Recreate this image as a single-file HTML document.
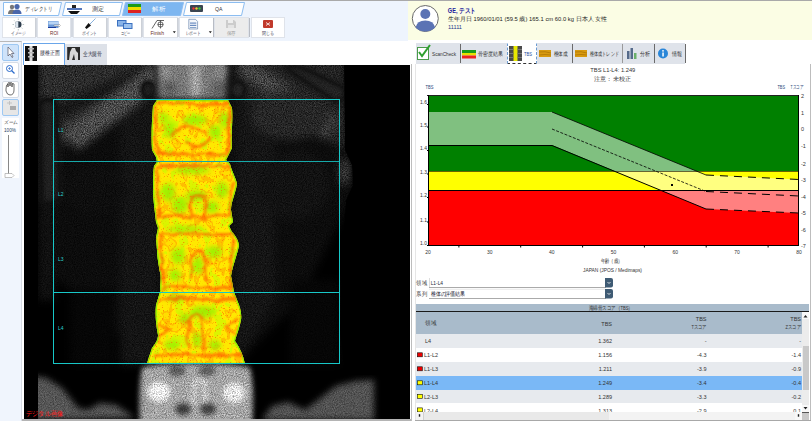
<!DOCTYPE html>
<html><head><meta charset="utf-8">
<style>
*{box-sizing:border-box;margin:0;padding:0}
html,body{width:812px;height:421px;overflow:hidden;background:#fff;font-family:"Liberation Sans",sans-serif;font-size:7px;color:#222}
.a{position:absolute}
#topline{left:0;top:0;width:812px;height:1px;background:#a9a9a9}
#lefttop{left:0;top:1px;width:408px;height:40px;background:#eef4fd}
#hdr{left:408px;top:1px;width:404px;height:39px;background:#fbfde4}
#hdr2{left:408px;top:40px;width:404px;height:3px;background:#fff}
.tab{top:2px;height:14px;width:58px}
.tb{top:18px;height:20px;width:33px;background:#fff;border:1px solid #d8dde5}
#toolcol{left:0;top:41px;width:22px;height:380px;background:#f0f5fd;border-top:1px solid #b8b8b8;border-right:1px solid #d6dbe3}
.tool{left:2px;width:17px;height:17px;background:#fff;border:1px solid #d5dce6;border-radius:2px}
#img{left:24px;top:65px;width:386px;height:354px;background:#000;overflow:hidden}
#botbar{left:22px;top:419px;width:390px;height:2px;background:#b4b4b4}
#vline{left:411px;top:64px;width:1px;height:357px;background:#bdbdbd}
#rtabs{left:416px;top:43px;width:269px;height:21px;background:#dfe3ea}
.sep{top:44px;width:1px;height:19px;background:#6a6a6a}
#rpanel{left:415px;top:64px;width:396px;height:357px;border-left:1px solid #e6e6e6;border-right:1px solid #bdbdbd}
</style></head><body>
<div class="a" id="topline"></div>
<div class="a" id="lefttop"></div>
<div class="a" id="hdr"></div>
<div class="a" id="toolcol"></div>

<!-- left main tabs -->
<svg class="a" style="left:0;top:0" width="408" height="41" viewBox="0 0 408 41">
 <g stroke="#8cbdf0" stroke-width="1">
  <path d="M3.5,2.5 L61.5,2.5 L58.5,15.5 L3.5,15.5 Z" fill="#fff"/>
  <path d="M65.5,2.5 L122.5,2.5 L119.5,15.5 L62.5,15.5 Z" fill="#fff"/>
  <path d="M125.5,2.5 L183.5,2.5 L180.5,15.5 L122.5,15.5 Z" fill="#7db6f0"/>
  <path d="M186.5,2.5 L244.5,2.5 L241.5,15.5 L183.5,15.5 Z" fill="#fff"/>
 </g>
 <!-- person icon -->
 <circle cx="12" cy="7" r="2.2" fill="#777"/><path d="M8,14 Q8,9.5 12,9.5 Q14,9.5 15,11 L15,14 Z" fill="#777"/>
 <circle cx="17" cy="6.5" r="2.6" fill="#4a67ab"/><path d="M12.5,14 Q12.5,9.5 17,9.5 Q21.5,9.5 21.5,14 Z" fill="#4a67ab"/>
 <!-- scanner icon -->
 <rect x="72" y="5" width="4" height="3" fill="#222"/><rect x="67" y="8" width="15" height="2" fill="#5577bb"/><path d="M68,11 L80,11 L77,14 L71,14 Z" fill="#111"/>
 <!-- analysis icon -->
 <rect x="128" y="4" width="13" height="3" fill="#1a9a1a"/><rect x="128" y="7" width="13" height="3" fill="#eedd00"/><rect x="128" y="10" width="13" height="3" fill="#dd2222"/>
 <!-- QA icon -->
 <rect x="190" y="5" width="13" height="7" rx="1" fill="#3a4552"/><circle cx="193.5" cy="8.5" r="1.2" fill="#e33"/><circle cx="196.5" cy="8.5" r="1.2" fill="#ec3"/><circle cx="199.5" cy="8.5" r="1.2" fill="#3c3"/>
 <g font-family="Liberation Sans" font-size="6" fill="#333">
  <text x="25" y="11" textLength="27.5" lengthAdjust="spacingAndGlyphs">ディレクトリ</text><text x="92" y="11" textLength="12" lengthAdjust="spacingAndGlyphs">測定</text><text x="152" y="11" fill="#fff" textLength="13" lengthAdjust="spacingAndGlyphs">解析</text><text x="215" y="11" textLength="7.5" lengthAdjust="spacingAndGlyphs">QA</text>
 </g>
 <!-- toolbar buttons -->
 <g fill="#fff" stroke="#dfe3ea">
  <rect x="2.5" y="17.5" width="33" height="20"/>
  <rect x="37.5" y="17.5" width="33" height="20"/>
  <rect x="73.5" y="17.5" width="33" height="20"/>
  <rect x="108.5" y="17.5" width="33" height="20"/>
  <rect x="143.5" y="17.5" width="34" height="20"/>
  <rect x="179.5" y="17.5" width="34" height="20"/>
  <rect x="214.5" y="17.5" width="34" height="20" fill="#ececec"/>
  <rect x="251.5" y="17.5" width="33" height="20"/>
 </g>
 <g stroke="#b8bcc4" stroke-width="1">
  <line x1="36" y1="18" x2="36" y2="37"/><line x1="72" y1="18" x2="72" y2="37"/><line x1="107" y1="18" x2="107" y2="37"/><line x1="142" y1="18" x2="142" y2="37"/><line x1="178" y1="18" x2="178" y2="37"/><line x1="213.5" y1="18" x2="213.5" y2="37"/><line x1="249.5" y1="18" x2="249.5" y2="37"/>
 </g>
 <!-- icons -->
 <g stroke="#9aa" stroke-width="0.7"><line x1="18.3" y1="18.5" x2="18.3" y2="20"/><line x1="18.3" y1="29" x2="18.3" y2="30.5"/><line x1="12.5" y1="24.5" x2="14" y2="24.5"/><line x1="22.6" y1="24.5" x2="24.1" y2="24.5"/><line x1="14.2" y1="20.4" x2="15.2" y2="21.4"/><line x1="21.4" y1="27.6" x2="22.4" y2="28.6"/><line x1="14.2" y1="28.6" x2="15.2" y2="27.6"/><line x1="21.4" y1="21.4" x2="22.4" y2="20.4"/></g>
 <circle cx="18.3" cy="24.5" r="3.2" fill="#2a3a4a"/><path d="M18.3,21.3 A3.2,3.2 0 0 0 18.3,27.7 Z" fill="#dde6ee"/>
 <rect x="48" y="21" width="10.5" height="7" fill="#6d9ad8"/><rect x="48.5" y="21.5" width="9.5" height="3" fill="#b8d4f4"/><rect x="48" y="27" width="8" height="1" fill="#1a3a9a"/><path d="M54,25 L59,25 L59,24 L60.5,25.5 L59,27 L59,26 L54,26 Z" fill="#fff" stroke="#777" stroke-width="0.4"/>
 <line x1="90" y1="24" x2="95.5" y2="18.5" stroke="#7aa8d8" stroke-width="0.9"/><path d="M85,27.5 L88.5,23 L91,25.5 L86.5,29 Z" fill="#111"/>
 <rect x="117.5" y="20.5" width="8.5" height="5.5" fill="#8ab4e8" stroke="#3a70c0" stroke-width="1"/><rect x="123.5" y="23.5" width="8.5" height="5" fill="#9cc2ee" stroke="#3a70c0" stroke-width="1"/>
 <path d="M152,28.5 L157,20.5 L164,20.5" stroke="#222" stroke-width="0.7" fill="none"/><circle cx="160.5" cy="24.5" r="2.6" fill="#fff" stroke="#222" stroke-width="0.7"/><path d="M160.5,20.5 L160.5,28.5 M157.8,24.5 L163.2,24.5" stroke="#222" stroke-width="0.6"/>
 <path d="M172.8,31.3 L175.8,31.3 L174.3,33.3 Z" fill="#222"/>
 <path d="M188.8,19.3 L195.5,19.3 L197.6,21.5 L197.6,29 L188.8,29 Z" fill="#f4f7fb" stroke="#6a88b0" stroke-width="0.7"/><rect x="190" y="22.5" width="6.3" height="1.2" fill="#6a8cc0"/><rect x="190" y="24.8" width="6.3" height="1.2" fill="#6a8cc0"/><rect x="190" y="27" width="6.3" height="1" fill="#8aa6cc"/>
 <path d="M208.8,31.3 L211.8,31.3 L210.3,33.3 Z" fill="#222"/>
 <path d="M226,20 L234,20 L236,22 L236,28 L226,28 Z" fill="#ccc"/><rect x="228" y="20" width="5" height="3" fill="#eee"/><rect x="228" y="25" width="6" height="3" fill="#e4e4e4"/>
 <rect x="263" y="20" width="10" height="8" rx="1" fill="#c0392b"/><path d="M266,22.5 L270,25.5 M270,22.5 L266,25.5" stroke="#fff" stroke-width="0.8"/>
 <g font-family="Liberation Sans" font-size="5" fill="#445" text-anchor="middle">
  <text x="18.3" y="35" textLength="15" lengthAdjust="spacingAndGlyphs">イメージ</text><text x="54.2" y="35" textLength="8.3" lengthAdjust="spacingAndGlyphs" fill="#6a2a2a">ROI</text><text x="89.5" y="35" textLength="15" lengthAdjust="spacingAndGlyphs">ポイント</text><text x="125.3" y="35" textLength="9.4" lengthAdjust="spacingAndGlyphs">コピー</text><text x="157.2" y="35.3" textLength="13.6" lengthAdjust="spacingAndGlyphs" fill="#6a2a2a">Finish</text><text x="193" y="35" textLength="15" lengthAdjust="spacingAndGlyphs">レポート</text><text x="231" y="35" fill="#999" textLength="9" lengthAdjust="spacingAndGlyphs">保存</text><text x="268" y="35" textLength="12" lengthAdjust="spacingAndGlyphs">閉じる</text>
 </g>
</svg>
<!-- tool column buttons -->
<div class="a tool" style="top:44px;background:#cfe3fa;border-color:#9ec8f2"></div>
<div class="a tool" style="top:62px"></div>
<div class="a tool" style="top:81px"></div>
<div class="a tool" style="top:99px;background:#e6e6e6;border-color:#9ec8f2"></div>
<div class="a" style="left:2px;top:118px;width:17px;height:60px;background:#fff"></div>
<svg class="a" style="left:0;top:41px" width="22" height="150" viewBox="0 41 22 150">
 <path d="M8,47 L8,56 L10,54 L12,57.5 L13,57 L11.5,53.5 L14,53.5 Z" fill="#fff" stroke="#556" stroke-width="0.7"/>
 <circle cx="9.5" cy="68.5" r="3" fill="none" stroke="#2a6acb" stroke-width="1"/><line x1="11.5" y1="70.5" x2="14.5" y2="73.5" stroke="#2a6acb" stroke-width="1.2"/><path d="M8,68.5 L11,68.5 M9.5,67 L9.5,70" stroke="#2a6acb" stroke-width="0.6"/>
 <path d="M6,89 Q6,84 8,84 L8,87 L8,83 Q9,82 10,83 L10,86 L10,83 Q11,82 12,83 L12,87 L12,84 Q13,83 14,84 L14,90 Q14,95 10,95 Q7,95 6,91 Z" fill="#fff" stroke="#333" stroke-width="0.7"/>
 <path d="M7,103 L12,103 M9.5,101 L9.5,105" stroke="#bbb" stroke-width="0.8"/><rect x="10" y="106" width="6" height="4" fill="#aaa"/>
 <g font-family="Liberation Sans" font-size="5" fill="#333"><text x="4" y="124" textLength="14" lengthAdjust="spacingAndGlyphs">ズーム</text><text x="4" y="131.5" fill="#246" textLength="12" lengthAdjust="spacingAndGlyphs">100%</text></g>
 <line x1="8.5" y1="135" x2="8.5" y2="176" stroke="#888" stroke-width="1"/>
 <path d="M5,173.5 L12,173.5 L14,175.5 L12,177.5 L5,177.5 Z" fill="#fff" stroke="#999" stroke-width="0.6"/>
</svg>
<!-- image view tabs -->
<div class="a" style="left:22px;top:42px;width:388px;height:23px;background:#fff"></div>
<div class="a" style="left:23px;top:43px;width:42px;height:22px;background:#fff;border:1px solid #6aa6ea;border-bottom:none"></div>
<div class="a" style="left:65px;top:43.5px;width:42px;height:21.5px;background:#dde1e8"></div>
<svg class="a" style="left:22px;top:42px" width="100" height="23" viewBox="22 42 100 23">
 <rect x="25" y="46" width="12" height="15" fill="#111"/><rect x="29.5" y="46" width="3" height="15" fill="#ddd"/><rect x="28" y="48" width="6" height="1.5" fill="#bbb"/><rect x="28" y="52" width="6" height="1.5" fill="#bbb"/><rect x="28" y="56" width="6" height="1.5" fill="#bbb"/>
 <rect x="67.2" y="47" width="12.8" height="13" fill="#2a2a2a"/><path d="M69,60 L70,52 L72,48 L75,48 L76,51 L78,53 L78,60 L75,60 L74,54 L72,60 Z" fill="#d8d8d8"/>
 <g font-family="Liberation Sans" font-size="5.5" fill="#334"><text x="40" y="54.5" textLength="19.7" lengthAdjust="spacingAndGlyphs">腰椎正面</text><text x="82.8" y="55.8" textLength="19" lengthAdjust="spacingAndGlyphs">全大腿骨</text></g>
</svg>
<div class="a" id="img"></div>
<svg class="a" style="left:24px;top:65px" width="386" height="354" viewBox="24 65 386 354">
<defs>
<filter id="tissue" filterUnits="userSpaceOnUse" x="24" y="65" width="386" height="354" color-interpolation-filters="sRGB">
 <feGaussianBlur in="SourceGraphic" stdDeviation="4" result="b"/>
 <feTurbulence type="fractalNoise" baseFrequency="0.9" numOctaves="2" seed="4" result="n0"/>
 <feGaussianBlur in="n0" stdDeviation="0.4" result="n"/>
 <feColorMatrix in="n" type="matrix" values="1.1 0 0 0 -0.05  1.1 0 0 0 -0.05  1.1 0 0 0 -0.05  0 0 0 0 1" result="ng"/>
 <feComposite in="b" in2="ng" operator="arithmetic" k1="2.0" k2="0" k3="0" k4="0"/>
</filter>
<filter id="bone" filterUnits="userSpaceOnUse" x="24" y="65" width="386" height="354" color-interpolation-filters="sRGB">
 <feGaussianBlur in="SourceGraphic" stdDeviation="3" result="b"/>
 <feTurbulence type="fractalNoise" baseFrequency="0.9" numOctaves="2" seed="9" result="n0"/>
 <feGaussianBlur in="n0" stdDeviation="0.4" result="n"/>
 <feColorMatrix in="n" type="matrix" values="0.5 0 0 0 0.25  0.5 0 0 0 0.25  0.5 0 0 0 0.25  0 0 0 0 1" result="ng"/>
 <feComposite in="b" in2="ng" operator="arithmetic" k1="2.0" k2="0" k3="0" k4="0"/>
</filter>
<filter id="sacf" filterUnits="userSpaceOnUse" x="24" y="65" width="386" height="354" color-interpolation-filters="sRGB">
 <feGaussianBlur in="SourceGraphic" stdDeviation="2.5" result="b"/>
 <feTurbulence type="fractalNoise" baseFrequency="0.9" numOctaves="2" seed="9" result="n0"/>
 <feGaussianBlur in="n0" stdDeviation="0.4" result="n"/>
 <feColorMatrix in="n" type="matrix" values="0.5 0 0 0 0.25  0.5 0 0 0 0.25  0.5 0 0 0 0.25  0 0 0 0 1" result="ng"/>
 <feComposite in="b" in2="ng" operator="arithmetic" k1="2.0" k2="0" k3="0" k4="0"/>
</filter>
<filter id="gb1" filterUnits="userSpaceOnUse" x="24" y="65" width="386" height="354"><feGaussianBlur stdDeviation="0.7"/></filter>
<filter id="gb2" filterUnits="userSpaceOnUse" x="24" y="65" width="386" height="354"><feGaussianBlur stdDeviation="2.5"/></filter>
<filter id="wavy" filterUnits="userSpaceOnUse" x="130" y="90" width="130" height="285">
 <feTurbulence type="fractalNoise" baseFrequency="0.09" numOctaves="2" seed="5" result="t"/>
 <feDisplacementMap in="SourceGraphic" in2="t" scale="7" xChannelSelector="R" yChannelSelector="G" result="d"/>
 <feGaussianBlur in="d" stdDeviation="1.1"/>
</filter>
<filter id="rdots" filterUnits="userSpaceOnUse" x="140" y="95" width="115" height="275" color-interpolation-filters="sRGB">
 <feTurbulence type="fractalNoise" baseFrequency="0.85" numOctaves="1" seed="11" result="t"/>
 <feColorMatrix in="t" type="matrix" values="0 0 0 0 1  0 0 0 0 0.4  0 0 0 0 0  0 0 0 10 -6.3"/>
</filter>
<filter id="spinecol" filterUnits="userSpaceOnUse" x="140" y="95" width="115" height="275" color-interpolation-filters="sRGB">
 <feTurbulence type="fractalNoise" baseFrequency="0.08 0.06" numOctaves="3" seed="21" result="t"/>
 <feColorMatrix in="t" type="matrix" values="1 0 0 0 0  1 0 0 0 0  1 0 0 0 0  0 0 0 0 1" result="g"/>
 <feComponentTransfer in="g">
  <feFuncR type="table" tableValues="0.75 0.75 0.75 0.75 0.75 0.75 0.75 0.75 0.75 0.75 0.75 0.75 1.00 1.00 1.00 1.00 1.00 1.00 1.00 1.00 1.00 1.00 1.00 1.00 1.00 1.00 1.00 1.00 1.00 1.00 1.00 1.00"/>
  <feFuncG type="table" tableValues="1.00 1.00 1.00 1.00 1.00 1.00 1.00 1.00 1.00 1.00 1.00 1.00 0.92 0.92 0.92 0.92 0.92 0.92 0.62 0.62 0.62 0.85 0.85 0.85 0.85 0.85 0.85 0.85 0.85 0.85 0.85 0.85"/>
  <feFuncB type="table" tableValues="0.00 0.00 0.00 0.00 0.00 0.00 0.00 0.00 0.00 0.00 0.00 0.00 0.00 0.00 0.00 0.00 0.00 0.00 0.00 0.00 0.00 0.00 0.00 0.00 0.00 0.00 0.00 0.00 0.00 0.00 0.00 0.00"/>
 </feComponentTransfer>
</filter>
<clipPath id="spclip"><path d="M157,100 C175,99 210,101 228,100 L232,108 C233,120 231,135 232,148 L228,156 L226,160 L230,164 C232,172 236,178 237,184 C235,195 231,202 231,210 L233,222 L229,226 L232,232 C236,236 239,242 239,246 C236,258 232,268 231,276 L234,292 L237,300 C240,306 242,314 241,320 C239,330 236,336 235,341 C240,348 243,355 245,364 L147,364 C149,356 151,352 152,348 C157,342 158,338 158,335 C156,325 155,315 156,305 L160,292 C160,285 161,280 160.5,275 C158,262 157,255 157,250 L156,238 L158,228 L156,222 C155,212 153,200 153,190 C153,180 153,172 154,166 L157,162 L156,157 L152,150 C151,135 152,120 153,106 Z"/></clipPath>
</defs>
<rect x="24" y="65" width="386" height="354" fill="#000"/>
<g filter="url(#tissue)">
 <rect x="0" y="40" width="500" height="400" fill="#000"/>
 <path d="M38,40 L345,40 L348,120 L352,200 L330,240 L300,300 L240,360 L150,360 L80,300 L38,260 Z" fill="#0c0c0c"/>
 <path d="M38,40 L160,40 L150,90 L80,140 L38,150 Z" fill="#2c2c2c"/>
 <path d="M40,112 L150,62 L156,74 L46,126 Z" fill="#161616"/>
 <path d="M236,40 L345,40 L348,150 L300,130 L236,95 Z" fill="#242424"/>
 <path d="M38,100 L58,100 L60,200 L38,200 Z" fill="#202020"/>
 <path d="M38,200 L55,200 L55,300 L38,300 Z" fill="#101010"/>
 <path d="M120,100 L158,100 L158,365 L120,365 Z" fill="#141414"/>
 <path d="M236,100 L275,100 L275,300 L236,365 Z" fill="#151515"/>
 <ellipse cx="295" cy="185" rx="35" ry="35" fill="#121212"/>
 <ellipse cx="95" cy="190" rx="30" ry="25" fill="#0e0e0e"/>
 <ellipse cx="345" cy="172" rx="6" ry="14" fill="#3a3a3a"/>
 <path d="M70,290 L115,290 L115,365 L70,365 Z" fill="#060606"/>
 <path d="M290,280 L340,280 L340,365 L290,365 Z" fill="#060606"/>
 <path d="M152,64 L162,86 L78,150 L62,132 Z" fill="#4a4a4a"/>
 <path d="M236,70 L248,60 L338,118 L326,138 Z" fill="#444"/>
 <ellipse cx="290" cy="115" rx="40" ry="25" fill="#262626"/>
</g>
<g filter="url(#bone)">
 <!-- ribs -->
 
 
 
 <path d="M270,58 L286,60 L348,90 L340,104 Z" fill="#262626" filter="url(#gb2)"/>
 <path d="M40,100 L56,100 L60,200 L42,205 Z" fill="#202020"/>
 <!-- T12 -->
 <path d="M156,60 L228,60 C227,75 226,90 226,99 L158,99 C158,90 157,75 156,60 Z" fill="#787878"/>
 <path d="M190,66 L201,66 L200,98 L191,98 Z" fill="#a8a8a8"/>
 <ellipse cx="170" cy="88" rx="7" ry="7" fill="#5a5a5a"/>
 <ellipse cx="218" cy="88" rx="6" ry="7" fill="#5a5a5a"/>
 <ellipse cx="165" cy="72" rx="8" ry="6" fill="#8c8c8c"/>
 <ellipse cx="222" cy="72" rx="6" ry="6" fill="#888"/>
 <ellipse cx="148" cy="90" rx="6" ry="9" fill="#222"/>
 <ellipse cx="238" cy="90" rx="7" ry="9" fill="#262626"/>
 <!-- iliac -->
 <path d="M20,380 L30,376 L46,378 L62,388 L78,408 L88,410 L100,403 L116,405 L135,418 L20,420 Z" fill="#555"/>
 <path d="M262,420 L272,406 L288,402 L305,410 L318,400 L336,386 L356,381 L374,380 L374,420 Z" fill="#525252"/>
</g>
<g filter="url(#sacf)">
 <!-- sacrum -->
 <path d="M142,368 C150,362 240,362 250,368 C254,385 253,405 252,425 L140,425 C139,405 139,385 142,368 Z" fill="#a4a4a4"/>
 <ellipse cx="177" cy="371" rx="9" ry="5" fill="#555"/>
 <ellipse cx="207" cy="371" rx="9" ry="5" fill="#5a5a5a"/>
 <ellipse cx="159" cy="392" rx="11" ry="10" fill="#f0f0f0"/>
 <ellipse cx="234" cy="393" rx="11" ry="10" fill="#e8e8e8"/>
 <path d="M194,404 L194,385 C194,378 205,378 205,385 L205,404" fill="none" stroke="#e0e0e0" stroke-width="3"/>
 <ellipse cx="183" cy="409" rx="8" ry="6" fill="#3a3a3a"/>
 <ellipse cx="208" cy="409" rx="8" ry="6" fill="#3e3e3e"/>
 <ellipse cx="145" cy="405" rx="5" ry="10" fill="#9a9a9a"/>
</g>
<rect x="24" y="65" width="14" height="354" fill="#000"/>
<path d="M344,60 L345,150 L352,165 L353,185 L346,200 L342,260 L340,330 L345,375 L420,375 L420,60 Z" fill="#000" filter="url(#gb1)"/>
<g clip-path="url(#spclip)">
 <rect x="140" y="95" width="115" height="275" fill="#ffe600"/>
 <rect x="140" y="95" width="115" height="275" filter="url(#spinecol)" opacity="0.55"/>
 <g filter="url(#gb2)" fill="#9af000" opacity="0.9">
  <ellipse cx="195" cy="120" rx="12" ry="5"/>
  <ellipse cx="170" cy="130" rx="6" ry="8"/>
  <ellipse cx="215" cy="132" rx="6" ry="7"/>
  <ellipse cx="192" cy="170" rx="18" ry="4"/>
  <ellipse cx="168" cy="192" rx="7" ry="9"/>
  <ellipse cx="196" cy="196" rx="10" ry="6"/>
  <ellipse cx="222" cy="190" rx="6" ry="8"/>
  <ellipse cx="185" cy="229" rx="20" ry="3"/>
  <ellipse cx="178" cy="256" rx="7" ry="8"/>
  <ellipse cx="214" cy="252" rx="8" ry="6"/>
  <ellipse cx="203" cy="312" rx="13" ry="6"/>
  <ellipse cx="172" cy="345" rx="8" ry="5"/>
  <ellipse cx="175" cy="298" rx="8" ry="3"/>
  <ellipse cx="215" cy="345" rx="6" ry="5"/>
  <ellipse cx="197" cy="340" rx="4" ry="8"/>
  <ellipse cx="180" cy="205" rx="8" ry="8"/>
  <ellipse cx="212" cy="207" rx="7" ry="6"/>
  <ellipse cx="198" cy="265" rx="5" ry="9"/>
  <ellipse cx="175" cy="275" rx="6" ry="6"/>
  <ellipse cx="185" cy="318" rx="6" ry="5"/>
  <ellipse cx="225" cy="120" rx="5" ry="8"/>
  <ellipse cx="163" cy="118" rx="4" ry="6"/>
 </g>
 <g fill="none" stroke="#86f000" stroke-width="2.5" opacity="0.9" filter="url(#gb1)"><path d="M157,100 C175,99 210,101 228,100 L232,108 C233,120 231,135 232,148 L228,156 L226,160 L230,164 C232,172 236,178 237,184 C235,195 231,202 231,210 L233,222 L229,226 L232,232 C236,236 239,242 239,246 C236,258 232,268 231,276 L234,292 L237,300 C240,306 242,314 241,320 C239,330 236,336 235,341 C240,348 243,355 245,364 L147,364 C149,356 151,352 152,348 C157,342 158,338 158,335 C156,325 155,315 156,305 L160,292 C160,285 161,280 160.5,275 C158,262 157,255 157,250 L156,238 L158,228 L156,222 C155,212 153,200 153,190 C153,180 153,172 154,166 L157,162 L156,157 L152,150 C151,135 152,120 153,106 Z"/></g>
 <g filter="url(#wavy)">
 <g fill="none" stroke="#ff5a00" stroke-width="2.8" opacity="0.7" stroke-linecap="round">
  <path d="M158,104 C175,102 210,104 228,104"/>
  <path d="M156,108 C155,125 155,140 157,152 M230,108 C229,125 230,140 228,152"/>
  <path d="M157,153 C175,156 210,152 227,155"/>
  <path d="M158,167 C175,164 210,167 231,166"/>
  <path d="M158,170 C157,185 157,200 160,214 M233,183 C230,195 229,205 230,214"/>
  <path d="M159,217 C180,213 205,219 229,215"/>
  <path d="M191,219 L191,203 C191,193 206,193 206,203 L206,219"/>
  <path d="M172,135 C178,126 196,124 205,132 M188,142 C194,150 206,146 210,138"/>
  <path d="M160,235 C180,232 210,236 234,234"/>
  <path d="M160,238 C161,255 163,270 164,286 M234,240 C231,255 229,270 231,286"/>
  <path d="M162,288 C180,284 210,290 232,287"/>
  <path d="M192,279 L192,260 C192,249 205,249 205,260 L205,279"/>
  <path d="M160,300 C180,296 210,302 236,299"/>
  <path d="M159,325 L168,330 L160,336 M236,320 L227,327 L236,334"/>
  <path d="M155,356 C180,352 210,358 242,354"/>
  <path d="M188,348 L188,325 C188,312 203,312 203,325 L203,348"/>
 </g>
 </g>
 <rect x="140" y="95" width="115" height="275" filter="url(#rdots)" opacity="0.65"/>
</g>
<!-- ROI -->
<g fill="none" shape-rendering="crispEdges">
 <rect x="53.5" y="99.5" width="286" height="264" stroke="#17c7c7"/>
 <line x1="54" y1="161.5" x2="339" y2="161.5" stroke="#16a9a9"/>
 <line x1="54" y1="292.5" x2="339" y2="292.5" stroke="#18c8c8"/>
</g>
<g font-family="Liberation Sans" font-size="5" fill="#2ad0d0">
 <text x="58" y="132">L1</text><text x="58" y="196">L2</text><text x="58" y="261">L3</text><text x="58" y="330">L4</text>
</g>
<text x="26" y="415.5" font-family="Liberation Sans" font-size="6.5" fill="#ff1a1a" textLength="37" lengthAdjust="spacingAndGlyphs">デジタル画像</text>
</svg>

<div class="a" id="botbar"></div>
<div class="a" id="vline"></div>
<div class="a" id="rpanel"></div>
<div class="a" id="rtabs"></div>

<!-- patient header -->
<svg class="a" style="left:408px;top:1px" width="404" height="39" viewBox="408 1 404 39">
 <circle cx="425.3" cy="18.5" r="13" fill="#fff" stroke="#6a6a6a" stroke-width="1"/>
 <circle cx="425.3" cy="14" r="5" fill="#5b73b4"/>
 <path d="M415.5,27.5 Q417,20.5 425.3,20.5 Q433.5,20.5 435.2,27.5 Q431,31.5 425.3,31.5 Q419.5,31.5 415.5,27.5 Z" fill="#5b73b4"/>
 <text x="447.8" y="12.8" font-family="Liberation Sans" font-size="7" font-weight="bold" fill="#1c1c9c" textLength="28" lengthAdjust="spacingAndGlyphs">GE, テスト</text>
 <text x="447.8" y="20.8" font-family="Liberation Sans" font-size="5.8" fill="#222" textLength="159.6" lengthAdjust="spacing">生年月日 1960/01/01  (59.5 歳)   165.1 cm  60.0 kg  日本人  女性</text>
 <text x="448" y="28.6" font-family="Liberation Sans" font-size="5.5" fill="#1a3a8a" textLength="14" lengthAdjust="spacingAndGlyphs">11111</text>
</svg>
<!-- right tab bar content -->
<div class="a sep" style="left:460px"></div>
<div class="a sep" style="left:572px"></div>
<div class="a sep" style="left:622px;background:#9a9a9a"></div>
<div class="a sep" style="left:654px"></div>
<div class="a sep" style="left:685px"></div>
<div class="a" style="left:506.5px;top:43px;width:30px;height:21px;background:#fff;border:1px dashed #6a9ad0;border-top:1px solid #fff;border-bottom:1px dashed #333"></div>
<svg class="a" style="left:416px;top:43px" width="269" height="21" viewBox="416 43 269 21">
 <rect x="417.5" y="47.5" width="11" height="12" fill="#fff" stroke="#4a9a4a" stroke-width="1"/>
 <path d="M419,52 L422,56 L430,45" fill="none" stroke="#2ea02e" stroke-width="2"/>
 <rect x="462" y="50" width="14" height="3" fill="#1a9a1a"/><rect x="462" y="53" width="14" height="2.5" fill="#e8e000"/><rect x="462" y="55.5" width="14" height="3" fill="#ee2222"/>
 <rect x="509" y="46" width="13" height="15" fill="#4a4a4a"/><rect x="513.5" y="46" width="4" height="15" fill="#e8e800"/><g fill="#777"><rect x="509" y="49" width="4.5" height="1"/><rect x="509" y="53" width="4.5" height="1"/><rect x="509" y="57" width="4.5" height="1"/><rect x="517.5" y="49" width="4.5" height="1"/><rect x="517.5" y="53" width="4.5" height="1"/><rect x="517.5" y="57" width="4.5" height="1"/></g>
 <rect x="539" y="50" width="12" height="7" fill="#d89a10"/><path d="M539,52 Q545,51 551,53 M539,55 Q545,54 551,55" stroke="#a06800" stroke-width="0.6" fill="none"/>
 <rect x="575" y="50" width="12" height="7" fill="#d89a10"/><path d="M575,52 Q581,51 587,53 M575,55 Q581,54 587,55" stroke="#a06800" stroke-width="0.6" fill="none"/>
 <rect x="627" y="51" width="2.5" height="8" fill="#556a8a"/><rect x="630.5" y="48" width="2.5" height="11" fill="#556a8a"/><rect x="634" y="53" width="2.5" height="6" fill="#6ab06a"/>
 <circle cx="663" cy="53.5" r="5" fill="#2a86d8"/><rect x="662.3" y="52.5" width="1.5" height="4" fill="#fff"/><circle cx="663" cy="50.8" r="0.9" fill="#fff"/>
 <g font-family="Liberation Sans" font-size="5.5" fill="#333">
  <text x="432" y="55.5" textLength="24" lengthAdjust="spacingAndGlyphs">ScanCheck</text><text x="478" y="55.8" textLength="24.5" lengthAdjust="spacingAndGlyphs">骨密度結果</text><text x="524" y="55.5" textLength="8" lengthAdjust="spacingAndGlyphs" fill="#1a4a9a">TBS</text><text x="553.5" y="55.8" textLength="14" lengthAdjust="spacingAndGlyphs">椎体成</text><text x="590" y="55.8" textLength="28.7" lengthAdjust="spacingAndGlyphs">椎体成トレンド</text><text x="640" y="55.8" textLength="10" lengthAdjust="spacingAndGlyphs">分析</text><text x="671.6" y="55.8" textLength="10" lengthAdjust="spacingAndGlyphs">情報</text>
 </g>
</svg>
<!-- dropdowns -->
<svg class="a" style="left:412px;top:274px" width="210" height="30" viewBox="412 274 210 30">
 <g font-family="Liberation Sans" font-size="5.5" fill="#333"><text x="416.4" y="285" textLength="10.4" lengthAdjust="spacingAndGlyphs">領域</text><text x="416.4" y="296.2" textLength="10.6" lengthAdjust="spacingAndGlyphs">系列</text></g>
 <rect x="429" y="277.5" width="180" height="10" fill="#fff"/>
 <line x1="429" y1="287.5" x2="606" y2="287.5" stroke="#aaa"/>
 <line x1="429" y1="298.5" x2="606" y2="298.5" stroke="#aaa"/>
 <line x1="429.5" y1="278" x2="429.5" y2="287" stroke="#ddd"/>
 <line x1="429" y1="289.3" x2="606" y2="289.3" stroke="#e4e4e4" stroke-width="0.8"/>
 <path d="M605,278 L611,278 Q613,278 613,280 L613,285.5 Q613,287.5 611,287.5 L605,287.5 Z" fill="#3f5b74"/>
 <path d="M605,289 L611,289 Q613,289 613,291 L613,296.5 Q613,298.5 611,298.5 L605,298.5 Z" fill="#3f5b74"/>
 <path d="M607.5,282 L609,283.5 L610.5,282" stroke="#fff" stroke-width="0.8" fill="none"/>
 <path d="M607.5,293 L609,294.5 L610.5,293" stroke="#fff" stroke-width="0.8" fill="none"/>
 <g font-family="Liberation Sans" font-size="5.5" fill="#223"><text x="430.7" y="285" textLength="12.3" lengthAdjust="spacingAndGlyphs">L1-L4</text><text x="430.7" y="296.2" textLength="34.5" lengthAdjust="spacingAndGlyphs">椎体の評価結果</text></g>
</svg>
<!-- table -->
<div class="a" style="left:416px;top:304px;width:393px;height:7px;background:#a9bbcb"></div>
<div class="a" style="left:416px;top:311px;width:393px;height:1.5px;background:#1a1a1a"></div>
<div class="a" style="left:416px;top:312px;width:386px;height:22px;background:#a9bbcb"></div>
<div class="a" style="left:416px;top:334px;width:386px;height:14px;background:#e7eaee"></div>
<div class="a" style="left:416px;top:348px;width:386px;height:14px;background:#fff"></div>
<div class="a" style="left:416px;top:362px;width:386px;height:14px;background:#e7eaee"></div>
<div class="a" style="left:416px;top:376px;width:386px;height:13.5px;background:#7ab8f6"></div>
<div class="a" style="left:416px;top:389.5px;width:386px;height:13.5px;background:#e7eaee"></div>
<div class="a" style="left:416px;top:403px;width:386px;height:9px;background:#fff"></div>
<svg class="a" style="left:410px;top:300px" width="402" height="121" viewBox="410 300 402 121">
 <defs><clipPath id="tclip"><rect x="410" y="300" width="392" height="112"/></clipPath></defs>
 <g clip-path="url(#tclip)">
 <g stroke="#111" stroke-width="0.6">
  <rect x="417.3" y="352.8" width="5" height="4" fill="#e00"/>
  <rect x="417.3" y="366.8" width="5" height="4" fill="#e00"/>
  <rect x="417.3" y="380.8" width="5" height="4" fill="#ff0"/>
  <rect x="417.3" y="394.3" width="5" height="4" fill="#ff0"/>
  <rect x="417.3" y="407.9" width="5" height="4" fill="#ff0"/>
 </g>
 <g font-family="Liberation Sans" font-size="5.5" fill="#333">
  <text x="589" y="309.5" textLength="44" lengthAdjust="spacingAndGlyphs">海綿骨スコア（TBS）</text>
  <text x="425" y="325" textLength="11" lengthAdjust="spacingAndGlyphs">領域</text>
  <text x="612" y="325.5" text-anchor="end">TBS</text>
  <text x="706.5" y="321" text-anchor="end">TBS</text><text x="691.4" y="328.5" textLength="15.4" lengthAdjust="spacingAndGlyphs">Tスコア</text>
  <text x="801" y="321" text-anchor="end">TBS</text><text x="785.6" y="328.5" textLength="15.4" lengthAdjust="spacingAndGlyphs">Zスコア</text>
  <text x="425" y="343">L4</text><text x="612" y="343" text-anchor="end">1.362</text><text x="706.5" y="343" text-anchor="end">-</text><text x="801" y="343" text-anchor="end">-</text>
  <text x="424" y="357">L1-L2</text><text x="612" y="357" text-anchor="end">1.156</text><text x="706.5" y="357" text-anchor="end">-4.3</text><text x="801" y="357" text-anchor="end">-1.4</text>
  <text x="424" y="371">L1-L3</text><text x="612" y="371" text-anchor="end">1.211</text><text x="706.5" y="371" text-anchor="end">-3.9</text><text x="801" y="371" text-anchor="end">-0.9</text>
  <text x="424" y="385">L1-L4</text><text x="612" y="385" text-anchor="end">1.249</text><text x="706.5" y="385" text-anchor="end">-3.4</text><text x="801" y="385" text-anchor="end">-0.4</text>
  <text x="424" y="398.5">L2-L3</text><text x="612" y="398.5" text-anchor="end">1.289</text><text x="706.5" y="398.5" text-anchor="end">-3.3</text><text x="801" y="398.5" text-anchor="end">-0.2</text>
  <text x="424" y="412.5">L2-L4</text><text x="612" y="412.5" text-anchor="end">1.313</text><text x="706.5" y="412.5" text-anchor="end">-2.9</text><text x="801" y="412.5" text-anchor="end">0.1</text>
 </g>
 </g>
</svg>
<!-- h scrollbar -->
<div class="a" style="left:416px;top:412px;width:386px;height:7.5px;background:#f3f3f3"></div>
<div class="a" style="left:423px;top:412px;width:186px;height:7.5px;background:#e9e9e9;border-left:1px solid #d0d0d0"></div>
<div class="a" style="left:416px;top:412px;width:7px;height:7.5px;background:#f4f4f4"></div>
<div class="a" style="left:415px;top:419.5px;width:396px;height:1.5px;background:#a8a8a8"></div>
<!-- v scrollbar -->
<div class="a" style="left:802px;top:312px;width:7px;height:100px;background:#ececec"></div>
<div class="a" style="left:802.5px;top:346px;width:6px;height:44px;background:#c9c9c9"></div>
<div class="a" style="left:802px;top:312px;width:7px;height:7px;background:#f8f8f8"></div>
<div class="a" style="left:802px;top:404.5px;width:7px;height:7px;background:#f8f8f8"></div>
<div class="a" style="left:801px;top:411.5px;width:8px;height:1px;background:#555"></div>
<div class="a" style="left:802px;top:412.5px;width:7px;height:7px;background:#c8c8c8"></div>
<div class="a" style="left:795px;top:412px;width:7px;height:7.5px;background:#f8f8f8"></div>
<svg class="a" style="left:410px;top:300px" width="402" height="121" viewBox="410 300 402 121">
 <path d="M803.5,317.5 L805.5,315 L807.5,317.5 Z" fill="#222"/>
 <path d="M803.5,407 L805.5,409.5 L807.5,407 Z" fill="#222"/>
 <rect x="418.8" y="414.2" width="1.4" height="2.5" fill="#222"/>
 <rect x="797.8" y="414.2" width="1.4" height="2.5" fill="#222"/>
</svg>

<svg class="a" style="left:0;top:0" width="812" height="421" viewBox="0 0 812 421" id="chart">
<g shape-rendering="crispEdges">
<rect x="428" y="95" width="371" height="76" fill="#008000"/>
<rect x="428" y="171" width="371" height="19" fill="#ffff00"/>
<rect x="428" y="190" width="371" height="55" fill="#ff0000"/>
</g>
<polygon points="428,112 552,112 706,175 799,179.5 799,213 706,209 552,145 428,145" fill="#fff" fill-opacity="0.5"/>
<g stroke="#000" fill="none" stroke-width="1">
<line x1="428" y1="171.5" x2="799" y2="171.5" stroke-opacity="0.6"/>
<line x1="428" y1="190.5" x2="799" y2="190.5"/>
<polyline points="428,145.5 552,145.5 706,209"/>
<line x1="552" y1="112" x2="706" y2="175" stroke-width="0.8"/>
<line x1="552" y1="129" x2="706" y2="191.5" stroke-width="0.8" stroke-dasharray="3,1.5"/>
<line x1="706" y1="175" x2="799" y2="179.5" stroke-dasharray="8,6"/>
<line x1="706" y1="191.5" x2="799" y2="196" stroke-dasharray="8,6"/>
<line x1="706" y1="209" x2="799" y2="213" stroke-dasharray="8,6"/>
</g>
<g shape-rendering="crispEdges">
<rect x="671" y="184" width="2" height="2" fill="#000"/>
<line x1="427" y1="95.5" x2="799" y2="95.5" stroke="#222"/>
<line x1="428.5" y1="95" x2="428.5" y2="246" stroke="#000"/>
<line x1="798.5" y1="95" x2="798.5" y2="246" stroke="#000"/>
<line x1="428" y1="245.5" x2="799" y2="245.5" stroke="#000"/>
</g>
<g font-family="Liberation Sans" font-size="5.5" fill="#333"><text x="427" y="104.2" text-anchor="end" font-size="5">1.6</text><line x1="427" y1="104.5" x2="429" y2="104.5" stroke="#000"/><text x="427" y="126.7" text-anchor="end" font-size="5">1.5</text><line x1="427" y1="127.0" x2="429" y2="127.0" stroke="#000"/><text x="427" y="150.2" text-anchor="end" font-size="5">1.4</text><line x1="427" y1="150.5" x2="429" y2="150.5" stroke="#000"/><text x="427" y="173.7" text-anchor="end" font-size="5">1.3</text><line x1="427" y1="174.0" x2="429" y2="174.0" stroke="#000"/><text x="427" y="197.2" text-anchor="end" font-size="5">1.2</text><line x1="427" y1="197.5" x2="429" y2="197.5" stroke="#000"/><text x="427" y="221.7" text-anchor="end" font-size="5">1.1</text><line x1="427" y1="222.0" x2="429" y2="222.0" stroke="#000"/><text x="427" y="245.2" text-anchor="end" font-size="5">1.0</text><line x1="427" y1="245.5" x2="429" y2="245.5" stroke="#000"/><text x="801" y="98.0">2</text><text x="801" y="114.7">1</text><text x="801" y="131.2">0</text><text x="801" y="148.0">-1</text><text x="801" y="165.5">-2</text><text x="801" y="181.8">-3</text><text x="801" y="198.6">-4</text><text x="801" y="215.0">-5</text><text x="801" y="231.7">-6</text><text x="801" y="248.0">-7</text><text x="428.0" y="253.5" text-anchor="middle" font-size="5">20</text><text x="489.8" y="253.5" text-anchor="middle" font-size="5">30</text><text x="551.7" y="253.5" text-anchor="middle" font-size="5">40</text><text x="613.5" y="253.5" text-anchor="middle" font-size="5">50</text><text x="675.3" y="253.5" text-anchor="middle" font-size="5">60</text><text x="737.1" y="253.5" text-anchor="middle" font-size="5">70</text><text x="799.0" y="253.5" text-anchor="middle" font-size="5">80</text><line x1="458.9" y1="245" x2="458.9" y2="247.5" stroke="#000"/><line x1="520.7" y1="245" x2="520.7" y2="247.5" stroke="#000"/><line x1="582.6" y1="245" x2="582.6" y2="247.5" stroke="#000"/><line x1="644.4" y1="245" x2="644.4" y2="247.5" stroke="#000"/><line x1="706.2" y1="245" x2="706.2" y2="247.5" stroke="#000"/><line x1="768.1" y1="245" x2="768.1" y2="247.5" stroke="#000"/>
<text x="425.5" y="89" textLength="8" lengthAdjust="spacingAndGlyphs" fill="#2a4a7a">TBS</text>
<text x="777.4" y="89" textLength="7.6" lengthAdjust="spacingAndGlyphs" fill="#2a4a7a">TBS</text><text x="790.5" y="89" textLength="13" lengthAdjust="spacingAndGlyphs" fill="#2a4a7a">Tスコア</text>
<text x="590.3" y="72.4" font-size="5.8" fill="#333" textLength="45" lengthAdjust="spacingAndGlyphs">TBS L1-L4: 1.249</text>
<text x="594" y="81" font-size="6" fill="#333" textLength="37" lengthAdjust="spacingAndGlyphs">注意：未校正</text>
<text x="600.6" y="263.3" font-size="5.5" fill="#333" textLength="22" lengthAdjust="spacingAndGlyphs">年齢（歳）</text>
<text x="583" y="271.5" font-size="5.5" fill="#333" textLength="59" lengthAdjust="spacingAndGlyphs">JAPAN (JPOS / Medimaps)</text>
</g></svg>
</body></html>
